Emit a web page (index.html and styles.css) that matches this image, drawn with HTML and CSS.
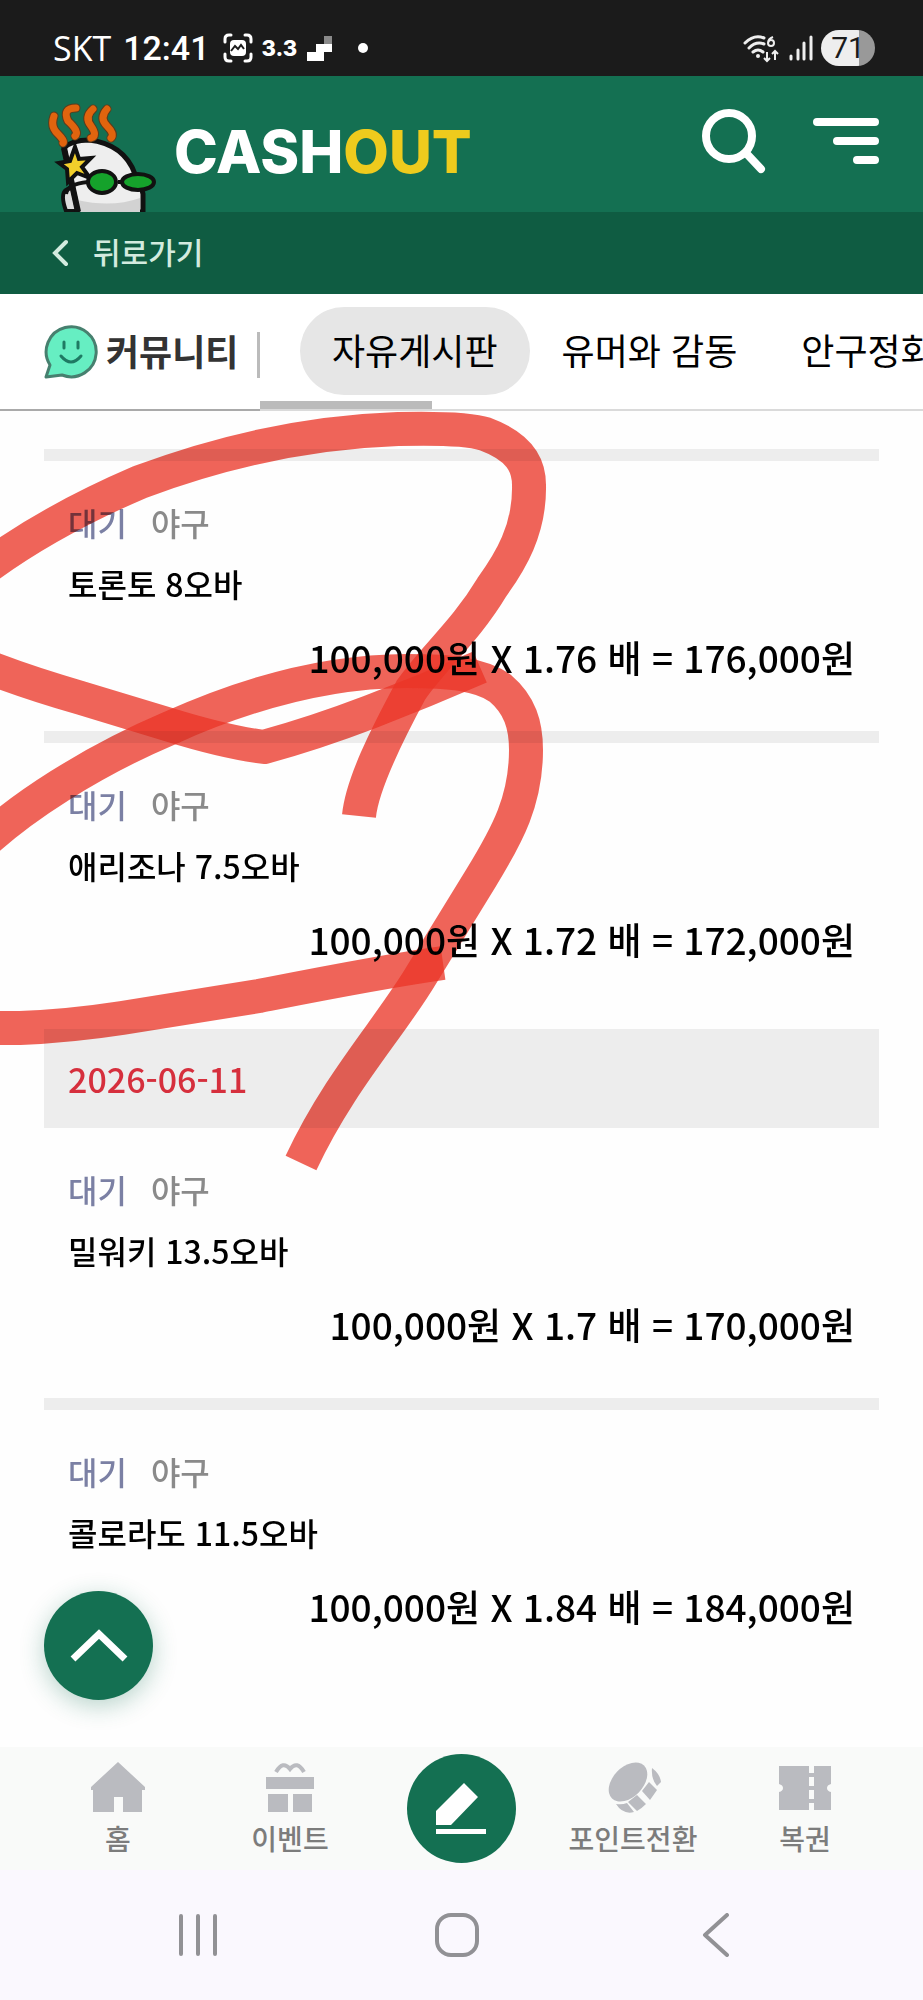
FILE: index.html
```html
<!DOCTYPE html>
<html lang="ko">
<head>
    <meta charset="UTF-8">
    <meta name="viewport" content="width=device-width, initial-scale=1">
    <title>CASHOUT - 자유게시판</title>
    <link rel="stylesheet" href="styles.css">
</head>
<body>

<!-- ===== STATUS BAR ===== -->
<div class="status_bar">
    <div class="status_left">
        <span class="carrier">SKT</span>
        <span class="clock">12:41</span>
        <svg class="status_capture" width="30" height="30" viewBox="0 0 30 30">
            <path d="M2 9V6q0-4 4-4h2M22 2h2q4 0 4 4v3M28 21v3q0 4-4 4h-2M8 28H6q-4 0-4-4v-3" fill="none" stroke="#fff" stroke-width="3" stroke-linecap="round"/>
            <rect x="7" y="7" width="16" height="16" rx="4" fill="#fff"/>
            <path d="M8 18l4-5 3 3 3-4 3 4" fill="none" stroke="#1b1b1b" stroke-width="2"/>
        </svg>
        <span class="status_badge">3.3</span>
        <svg class="status_steps" width="25" height="25" viewBox="0 0 25 25">
            <path d="M0 16h9V8h8v0h8v8h-8v9H0z" fill="#fff"/>
            <rect x="17" y="0" width="8" height="8" fill="#8a8a8a"/>
        </svg>
        <span class="status_dot"></span>
    </div>
    <div class="status_right">
        <svg width="38" height="30" viewBox="0 0 38 30">
            <g fill="none" stroke="#eee" stroke-width="3" stroke-linecap="round">
                <path d="M2 10Q11 1 21 5"/>
                <path d="M6 15q7-7 15-4"/>
                <path d="M10 19q5-4 10 0"/>
            </g>
            <circle cx="15" cy="23" r="2" fill="#eee"/>
            <path d="M30 4q-5 2-5 6a3 3 0 1 0 3-3q-2 0-3 3" fill="none" stroke="#eee" stroke-width="2"/>
            <path d="M24 19v9M21 25l3 3 3-3M32 27v-9M29 21l3-3 3 3" fill="none" stroke="#eee" stroke-width="2"/>
        </svg>
        <svg width="24" height="26" viewBox="0 0 24 26">
            <path d="M2 21v3M9 15v9M15 8v16M22 2v22" stroke="#eee" stroke-width="3" stroke-linecap="round"/>
        </svg>
        <span class="battery">71</span>
    </div>
</div>

<!-- ===== HEADER ===== -->
<header class="site_header">
    <a class="logo" href="#">
        <svg class="mascot" width="112" height="110" viewBox="0 0 112 110">
            <path d="M18 109Q12 92 18 88l6-3 6 24z" fill="#ddd" stroke="#111" stroke-width="4"/>
            <path d="M16 46Q24 38 41 38 76 42 87 72q7 14 8 20v18H30z" fill="#eee" stroke="#111" stroke-width="5"/>
            <path d="M29 98q35 8 63-2v14H32z" fill="#d2d2d2"/>
            <path d="M16 46l14 64" stroke="#111" stroke-width="6"/>
            <g fill="none" stroke="#5b3b1c" stroke-width="9" stroke-linecap="round">
                <path d="M6 14q-4 11 4 18 7 7 5 9"/>
                <path d="M28 6q-14 0-8 13 12 11 7 15"/>
                <path d="M45 7q-9 8-2 17 7 10 0 12"/>
                <path d="M59 7q-8 9 0 17 8 8 4 12"/>
            </g>
            <g fill="none" stroke="#e0640e" stroke-width="7" stroke-linecap="round">
                <path d="M6 14q-4 11 4 18 7 7 5 9"/>
                <path d="M28 6q-14 0-8 13 12 11 7 15"/>
                <path d="M45 7q-9 8-2 17 7 10 0 12"/>
                <path d="M59 7q-8 9 0 17 8 8 4 12"/>
            </g>
            <path d="M27 45l4 12 12-1-9 9 8 11-13-5-9 9-1-13-8-6 11-2z" fill="#f2cf2b" stroke="#111" stroke-width="4"/>
            <path d="M18 92q1-10 22-12M70 80h10" fill="none" stroke="#111" stroke-width="4"/>
            <ellipse cx="54" cy="80" rx="14" ry="11" fill="#15a22b" stroke="#111" stroke-width="4"/>
            <ellipse cx="90" cy="80" rx="16" ry="8" fill="#15a22b" stroke="#111" stroke-width="4"/>
        </svg>
        <span class="logo_text">CASH<span class="logo_accent">OUT</span></span>
    </a>
    <div class="header_buttons">
        <button type="button" aria-label="검색">
            <svg width="66" height="66" viewBox="0 0 66 66">
                <circle cx="27" cy="28" r="23" fill="none" stroke="#fff" stroke-width="8"/>
                <path d="M44 45l15 16" stroke="#fff" stroke-width="8" stroke-linecap="round"/>
            </svg>
        </button>
        <button type="button" aria-label="메뉴">
            <svg width="66" height="46" viewBox="0 0 66 46">
                <path d="M4 4h58M24 23h38M44 42h18" stroke="#fff" stroke-width="8" stroke-linecap="round"/>
            </svg>
        </button>
    </div>
</header>

<a class="back_bar" href="#">
    <svg width="16" height="28" viewBox="0 0 16 28">
        <path d="M14 3L3 14l11 11" fill="none" stroke="#d3ebdf" stroke-width="4" stroke-linecap="round"/>
    </svg>
    <span>뒤로가기</span>
</a>

<!-- ===== BOARD TABS ===== -->
<div class="board_tabs">
    <h1 class="board_title">
        <svg width="54" height="54" viewBox="0 0 54 54">
            <path d="M2 52l4-12A25 25 0 1 1 18 50z" fill="#66eec2" stroke="#47806f" stroke-width="3" stroke-linejoin="round"/>
            <path d="M20 17v6M34 17v6M17 31q10 12 20 0" fill="none" stroke="#1f7a63" stroke-width="3" stroke-linecap="round"/>
        </svg>
        <span>커뮤니티</span>
    </h1>
    <nav class="tab_list">
        <a class="tab active" href="#">자유게시판</a>
        <a class="tab" href="#">유머와 감동</a>
        <a class="tab" href="#">안구정화</a>
        <span class="tab_scrollbar"></span>
    </nav>
</div>

<!-- ===== BET LIST ===== -->
<main class="bet_list">
    <section class="bet_item ruled">
        <p class="bet_tags"><span class="state">대기</span><span>야구</span></p>
        <h2>토론토 8오바</h2>
        <p class="bet_sum">100,000원 X 1.76 배 = 176,000원</p>
    </section>
    <section class="bet_item ruled">
        <p class="bet_tags"><span class="state">대기</span><span>야구</span></p>
        <h2>애리조나 7.5오바</h2>
        <p class="bet_sum">100,000원 X 1.72 배 = 172,000원</p>
    </section>

    <p class="bet_date">2026-06-11</p>

    <section class="bet_item">
        <p class="bet_tags"><span class="state">대기</span><span>야구</span></p>
        <h2>밀워키 13.5오바</h2>
        <p class="bet_sum">100,000원 X 1.7 배 = 170,000원</p>
    </section>
    <section class="bet_item ruled">
        <p class="bet_tags"><span class="state">대기</span><span>야구</span></p>
        <h2>콜로라도 11.5오바</h2>
        <p class="bet_sum">100,000원 X 1.84 배 = 184,000원</p>
    </section>

    <!-- red marker strokes -->
    <svg class="marker" width="560" height="800" viewBox="0 411 560 800">
        <path d="M-20 572C20 542 70 512 140 482C220 452 310 432 398 429C440 428 470 429 485 434C520 447 529 465 529 485C530 530 510 562 492 587C465 632 433 658 411 690C385 738 362 785 359 816"/>
        <path d="M-20 664C20 680 60 692 81 698L170 725Q225 742 264 747Q315 733 370 712T480 667"/>
        <path d="M-20 846C20 808 90 762 170 728C250 692 330 671 407 671C450 671 480 674 500 688C520 705 526 725 526 750C526 800 508 834 481 878L422 974C390 1028 340 1080 301 1163"/>
        <path d="M-20 1028H20Q70 1026 122 1018L259 996C320 984 380 972 443 963"/>
    </svg>

    <button class="to_top" type="button" aria-label="맨 위로">
        <svg width="58" height="36" viewBox="0 0 58 36">
            <path d="M3 31L29 6l26 25" fill="none" stroke="#fff" stroke-width="7"/>
        </svg>
    </button>
</main>

<!-- ===== BOTTOM NAV ===== -->
<nav class="bottom_nav">
    <a href="#">
        <svg width="54" height="52" viewBox="0 0 54 52">
            <path d="M27 1L54 26v3h-3v22H32V36h-9v15H2V29H0v-3z" fill="#babbc0"/>
        </svg>
        홈
    </a>
    <a href="#">
        <svg width="50" height="52" viewBox="0 0 50 52">
            <path d="M11 11q7-12 14-3 7-9 14 3" fill="none" stroke="#babbc0" stroke-width="4"/>
            <path d="M1 16h48v12H1zM3 33h20v18H3zM28 33h19v18H28z" fill="#babbc0"/>
        </svg>
        이벤트
    </a>
    <a class="write_button" href="#" aria-label="글쓰기">
        <svg width="54" height="54" viewBox="0 0 54 54">
            <path d="M29 1l14 14-27 28H1V29zM1 47h50v5H1z" fill="#fff"/>
        </svg>
    </a>
    <a href="#">
        <svg width="58" height="52" viewBox="0 0 58 52">
            <ellipse cx="24" cy="21" rx="23" ry="15" transform="rotate(-46 24 21)" fill="#babbc0"/>
            <path d="M48 7q8 6 9 14l-4 4q-6-7-5-18zM45 21l8 8-7 10-8-9zM33 34l9 9q-5 5-9 7l-9-9zM12 43q6 1 11-1l7 9q-11 3-18-8z" fill="#babbc0"/>
        </svg>
        포인트전환
    </a>
    <a href="#">
        <svg width="54" height="52" viewBox="0 0 54 52">
            <path d="M1 5h30v44H1V31q4-1 4-4t-4-4zM36 5h17v18q-4 1-4 4t4 4v18H36zM31 12h5v4h-5zM31 25h5v4h-5zM31 38h5v4h-5z" fill="#babbc0"/>
        </svg>
        복권
    </a>
</nav>

<!-- ===== SYSTEM NAV ===== -->
<div class="system_nav">
    <button type="button" aria-label="최근 앱">
        <svg width="40" height="44" viewBox="0 0 40 44">
            <path d="M3 3v38M20 3v38M37 3v38" stroke="#919195" stroke-width="4" stroke-linecap="round"/>
        </svg>
    </button>
    <button type="button" aria-label="홈 화면">
        <svg width="44" height="44" viewBox="0 0 44 44">
            <rect x="2" y="2" width="40" height="40" rx="14" fill="none" stroke="#919195" stroke-width="4"/>
        </svg>
    </button>
    <button type="button" aria-label="뒤로">
        <svg width="28" height="44" viewBox="0 0 28 44">
            <path d="M25 2L3 22l22 20" fill="none" stroke="#919195" stroke-width="4" stroke-linecap="round" stroke-linejoin="round"/>
        </svg>
    </button>
</div>

</body>
</html>
```

FILE: styles.css
```css
* {
    box-sizing: border-box;
}

body {
    margin: 0;
    min-height: 100vh;
    display: flex;
    flex-direction: column;
    font-family: "Noto Sans CJK KR", "Noto Sans", sans-serif;
    font-weight: 500;
    background-color: #fefefe;
    color: #000;
}

h1, h2, p {
    margin: 0;
}

a {
    color: inherit;
    text-decoration: none;
}

button {
    padding: 0;
    border: none;
    background: none;
    cursor: pointer;
}

svg {
    display: block;
    flex-shrink: 0;
}

/* ===== Status bar ===== */
.status_bar {
    height: 76px;
    padding: 20px 48px 0 53px;
    display: flex;
    justify-content: space-between;
    align-items: flex-start;
    background-color: #1b1b1b;
    color: #fff;
    font-family: Roboto, sans-serif;
}

.status_left,
.status_right {
    height: 56px;
    display: flex;
    align-items: center;
}

.carrier {
    font-family: "Open Sans", sans-serif;
    font-weight: 400;
    font-size: 34px;
    margin-right: 12px;
}

.clock {
    font-size: 34px;
}

.status_capture {
    margin: 0 8px 0 14px;
}

.status_badge {
    font-family: Inter, sans-serif;
    font-size: 22px;
    font-weight: 800;
}

.status_steps {
    margin: 0 26px 0 10px;
}

.status_dot {
    width: 10px;
    height: 10px;
    border-radius: 50%;
    background-color: #fff;
}

.status_right {
    gap: 8px;
}

.battery {
    width: 54px;
    height: 36px;
    line-height: 36px;
    border-radius: 18px;
    text-align: center;
    font-size: 30px;
    font-weight: 400;
    color: #1b1b1b;
    background: linear-gradient(90deg, #eee 71%, #999 71%);
}

/* ===== Header ===== */
.site_header {
    height: 136px;
    padding: 0 44px 0 48px;
    display: flex;
    justify-content: space-between;
    align-items: flex-end;
    background-color: #147052;
}

.logo {
    display: flex;
    align-items: flex-end;
    gap: 14px;
}

.logo_text {
    font-family: Inter, sans-serif;
    font-size: 59px;
    font-weight: 800;
    line-height: 64px;
    padding-bottom: 28px;
    color: #fff;
}

.logo_accent {
    color: #eecb1d;
}

.header_buttons {
    display: flex;
    align-items: center;
    gap: 45px;
    padding-bottom: 38px;
}

.back_bar {
    height: 82px;
    padding: 0 52px;
    display: flex;
    align-items: center;
    gap: 25px;
    background-color: #0f5c42;
    color: #d3ebdf;
    font-size: 30px;
}

.back_bar span,
.board_title span {
    padding-bottom: 4px;
}

/* ===== Board tabs ===== */
.board_tabs {
    height: 117px;
    display: flex;
    background-color: #fff;
    overflow: hidden;
}

.board_title {
    width: 260px;
    flex-shrink: 0;
    padding-left: 44px;
    display: flex;
    align-items: center;
    gap: 8px;
    font-size: 36px;
    font-weight: 700;
    color: #333;
    border-bottom: 2px solid #aaa;
    background: linear-gradient(#bbb, #bbb) no-repeat 257px 38px / 3px 46px;
}

.tab_list {
    position: relative;
    flex: 1;
    min-width: 0;
    padding: 13px 0 0 40px;
    display: flex;
    border-bottom: 2px solid #dadada;
    overflow: hidden;
}

.tab {
    flex-shrink: 0;
    height: 88px;
    line-height: 84px;
    padding: 0 32px;
    border-radius: 44px;
    font-size: 36px;
    font-weight: 400;
}

.tab.active {
    background-color: #e6e6e6;
}

.tab_scrollbar {
    position: absolute;
    left: 0;
    bottom: 0;
    width: 172px;
    height: 8px;
    background-color: #bbb;
}

/* ===== Bet list ===== */
.bet_list {
    position: relative;
    flex: 1;
    padding: 38px 44px 0;
    overflow: hidden;
    isolation: isolate;
    background-color: #fefefe;
}

.bet_item {
    padding: 40px 24px 50px;
}

.bet_item.ruled {
    border-top: 12px solid #ededed;
}

.bet_tags {
    display: flex;
    gap: 24px;
    font-size: 32px;
    line-height: 42px;
    color: #8a8a8a;
}

.state {
    color: #7b80a4;
}

.bet_item h2 {
    margin-top: 16px;
    font-size: 32px;
    font-weight: 500;
    line-height: 48px;
}

.bet_sum {
    margin-top: 26px;
    font-size: 37px;
    line-height: 48px;
    text-align: right;
}

.bet_date {
    margin-top: 16px;
    padding: 0 24px;
    font-size: 34px;
    line-height: 99px;
    background-color: #ededed;
    color: #d62f3d;
}

.marker {
    position: absolute;
    top: 0;
    left: 0;
    fill: none;
    stroke: rgba(235, 53, 39, 0.77);
    stroke-width: 34px;
    stroke-linejoin: round;
    mix-blend-mode: multiply;
    pointer-events: none;
}

.to_top {
    position: absolute;
    left: 44px;
    bottom: 47px;
    width: 109px;
    height: 109px;
    display: flex;
    justify-content: center;
    align-items: center;
    border-radius: 50%;
    background-color: #147052;
    box-shadow: 0 6px 24px rgba(20, 112, 82, 0.3);
}

/* ===== Bottom nav ===== */
.bottom_nav {
    height: 123px;
    padding: 0 32px;
    display: flex;
    align-items: flex-start;
    background-color: #f9faf9;
    color: #7c7c7c;
    font-size: 28px;
    line-height: 40px;
}

.bottom_nav a {
    flex: 1;
    padding-top: 14px;
    display: flex;
    flex-direction: column;
    align-items: center;
    gap: 5px;
}

.bottom_nav .write_button {
    flex: none;
    width: 109px;
    height: 109px;
    margin: 7px 31px;
    padding: 0;
    justify-content: center;
    border-radius: 50%;
    background-color: #147052;
}

/* ===== System nav ===== */
.system_nav {
    height: 130px;
    padding: 0 78px 0 69px;
    display: flex;
    align-items: center;
    background-color: #faf8fe;
}

.system_nav button {
    flex: 1;
    height: 100%;
    display: flex;
    justify-content: center;
    align-items: center;
}
```
